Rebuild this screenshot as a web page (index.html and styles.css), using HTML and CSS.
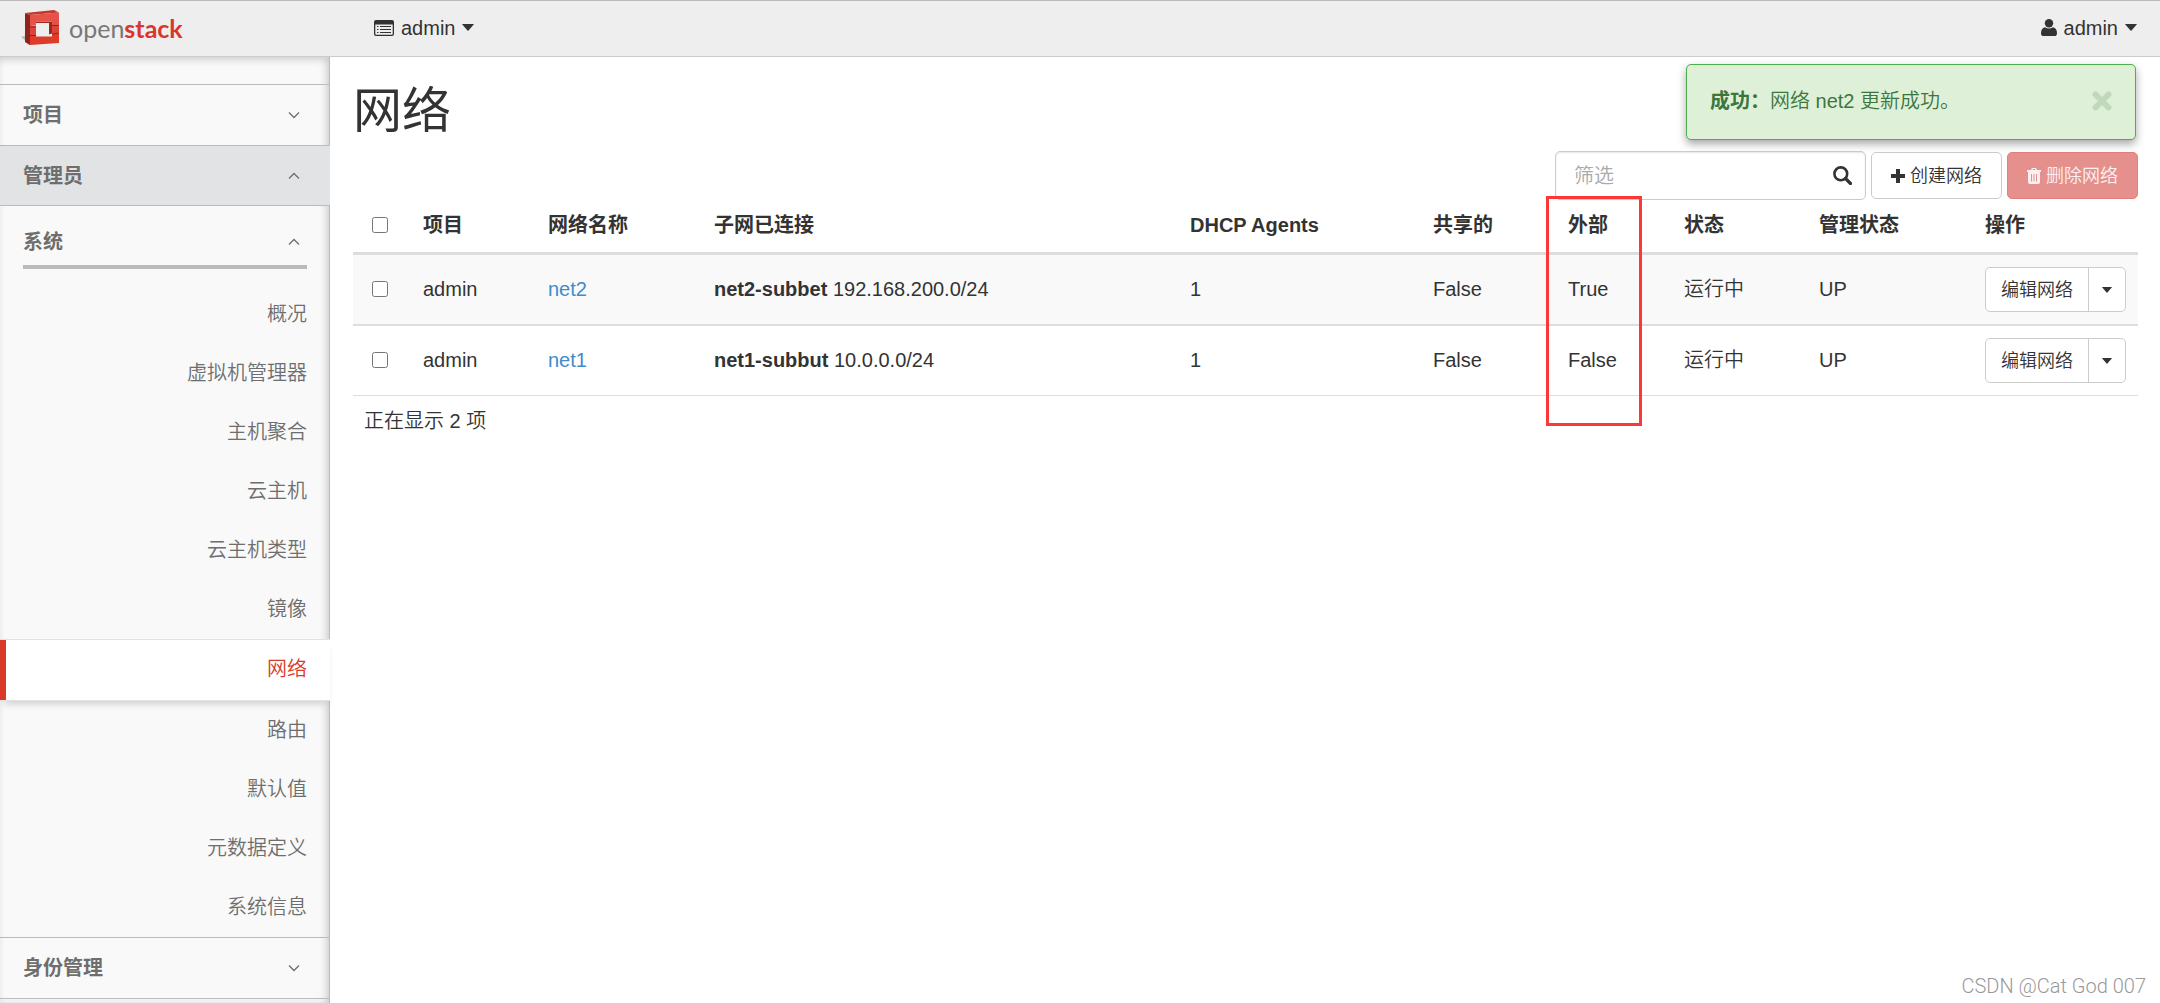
FILE: index.html
```html
<!DOCTYPE html>
<html lang="zh-CN">
<head>
<meta charset="utf-8">
<title>网络 - OpenStack Dashboard</title>
<meta name="viewport" content="width=device-width, initial-scale=1">
<link rel="stylesheet" href="styles.css">
</head>
<body>
<svg class="sprite" aria-hidden="true">
  <symbol id="chevron-down" viewBox="0 0 12 8"><path d="M1 1.5 6 6.500 11 1.500" fill="none" stroke="currentColor" stroke-width="1.300"/></symbol>
  <symbol id="chevron-up" viewBox="0 0 12 8"><path d="M1 6.500 6 1.500 11 6.500" fill="none" stroke="currentColor" stroke-width="1.300"/></symbol>
  <symbol id="caret" viewBox="0 0 12 7"><path d="M0.500 0h11q.6 0 .2.500L6.500 6.400q-.5.500-1 0L.3.500Q-.1 0 .5 0z" fill="currentColor"/></symbol>
</svg>

<header class="topbar">
  <a class="brand" href="#" aria-label="openstack">
    <svg class="brand-mark" viewBox="0 0 40 36" aria-hidden="true">
      <path d="M0 27 6 25v9l4 1z" fill="#9a9a9a" opacity=".6"/>
      <path d="M4 3 9 5v30l-5-3z" fill="#8f241c"/>
      <path d="M4 3 33 0l5 2.500L9 5z" fill="#c0392d"/>
      <path d="M9 5 38 2.500v13H31V11.500H15v4L9 16z" fill="#e6524a"/>
      <path d="M9 16h6v9H9zM31 15.500h7V23l-7 1z" fill="#dc443a"/>
      <path d="M9 25h6v1.500h16V24l7-1v10L9 35z" fill="#dd3c28"/>
      <path d="M15 11.500h16v14.500H15z" fill="#eee"/>
      <path d="M28 11.500h3v12l-3 1zM15 11.500h16v1.500H15z" fill="#9c2820"/>
      <path d="M4 15.500 9 17h6M4 23.500 9 25.500h6M31 15.500h7M31 24l7-1" fill="none" stroke="#8f241c" stroke-width="1.200"/>
    </svg>
    <span class="brand-name">open<b>stack</b></span>
  </a>
  <button class="menu" type="button">
    <svg width="20" height="16" viewBox="0 0 20 16" aria-hidden="true">
      <path d="M2 0h16q2 0 2 2v12q0 2-2 2H2q-2 0-2-2V2Q0 0 2 0zM1.300 4.500v9.200q0 1 1 1h15.400q1 0 1-1V4.500z" fill="currentColor" fill-rule="evenodd"/>
      <path d="M3 6.500h1.500M3 9.500h1.500M3 12.500h1.500M6 6.500h11M6 9.500h11M6 12.500h11" stroke="currentColor" stroke-width="1.200"/>
    </svg>
    <span>admin</span>
    <svg class="caret" aria-hidden="true"><use href="#caret"/></svg>
  </button>
  <button class="menu menu-user" type="button">
    <svg width="16" height="17" viewBox="0 0 16 17" aria-hidden="true">
      <circle cx="8" cy="4.200" r="4.200" fill="currentColor"/>
      <path d="M4 8.200Q8 11 12 8.200q4 .8 4 6 0 2.800-2.500 2.800h-11Q0 17 0 14.200 0 9 4 8.200z" fill="currentColor"/>
    </svg>
    <span>admin</span>
    <svg class="caret" aria-hidden="true"><use href="#caret"/></svg>
  </button>
</header>

<div class="layout">
  <nav class="sidebar">
    <a class="panel" href="#"><span>项目</span><svg class="chevron" aria-hidden="true"><use href="#chevron-down"/></svg></a>
    <a class="panel panel-open" href="#"><span>管理员</span><svg class="chevron" aria-hidden="true"><use href="#chevron-up"/></svg></a>
    <div class="group">
      <a class="group-title" href="#"><span>系统</span><svg class="chevron" aria-hidden="true"><use href="#chevron-up"/></svg></a>
      <ul class="links">
        <li><a href="#">概况</a></li>
        <li><a href="#">虚拟机管理器</a></li>
        <li><a href="#">主机聚合</a></li>
        <li><a href="#">云主机</a></li>
        <li><a href="#">云主机类型</a></li>
        <li><a href="#">镜像</a></li>
        <li><a class="active" href="#" aria-current="page">网络</a></li>
        <li><a href="#">路由</a></li>
        <li><a href="#">默认值</a></li>
        <li><a href="#">元数据定义</a></li>
        <li><a href="#">系统信息</a></li>
      </ul>
    </div>
    <a class="panel panel-last" href="#"><span>身份管理</span><svg class="chevron" aria-hidden="true"><use href="#chevron-down"/></svg></a>
  </nav>

  <main class="content">
    <h1>网络</h1>
    <div class="toolbar">
      <div class="filter">
        <input type="text" placeholder="筛选" aria-label="筛选">
        <button type="button" aria-label="搜索">
          <svg width="19" height="19" viewBox="0 0 19 19" aria-hidden="true"><circle cx="7.800" cy="7.800" r="6.400" fill="none" stroke="currentColor" stroke-width="2.600"/><path d="m12.500 12.500 5 5" stroke="currentColor" stroke-width="3.200" stroke-linecap="round"/></svg>
        </button>
      </div>
      <button class="btn" type="button">
        <svg width="14" height="14" viewBox="0 0 14 14" aria-hidden="true"><path d="M7 0v14M0 7h14" stroke="currentColor" stroke-width="4"/></svg>
        创建网络
      </button>
      <button class="btn btn-danger" type="button" disabled>
        <svg width="14" height="16" viewBox="0 0 14 16" aria-hidden="true"><path d="M5 0h4l1 2h4v2h-1v10q0 2-2 2H3q-2 0-2-2V4H0V2h4zm.5 2h3L8 1H6zM4 6v7.500h1V6zm2.500 0v7.500h1V6zM9 6v7.500h1V6z" fill="currentColor" fill-rule="evenodd"/></svg>
        删除网络
      </button>
    </div>

    <table class="networks">
      <colgroup>
        <col class="c-check"><col class="c-project"><col class="c-name"><col><col class="c-dhcp"><col class="c-shared"><col class="c-external"><col class="c-status"><col class="c-admin"><col class="c-actions">
      </colgroup>
      <thead>
        <tr>
          <th><input type="checkbox" aria-label="全选"></th>
          <th>项目</th>
          <th>网络名称</th>
          <th>子网已连接</th>
          <th>DHCP Agents</th>
          <th>共享的</th>
          <th class="marked">外部<span class="marker"></span></th>
          <th>状态</th>
          <th>管理状态</th>
          <th>操作</th>
        </tr>
      </thead>
      <tbody>
        <tr>
          <td><input type="checkbox" aria-label="net2"></td>
          <td>admin</td>
          <td><a href="#">net2</a></td>
          <td><b>net2-subbet</b> 192.168.200.0/24</td>
          <td>1</td>
          <td>False</td>
          <td>True</td>
          <td>运行中</td>
          <td>UP</td>
          <td><div class="split"><button type="button">编辑网络</button><button type="button" aria-label="更多操作"><svg class="caret" aria-hidden="true"><use href="#caret"/></svg></button></div></td>
        </tr>
        <tr>
          <td><input type="checkbox" aria-label="net1"></td>
          <td>admin</td>
          <td><a href="#">net1</a></td>
          <td><b>net1-subbut</b> 10.0.0.0/24</td>
          <td>1</td>
          <td>False</td>
          <td>False</td>
          <td>运行中</td>
          <td>UP</td>
          <td><div class="split"><button type="button">编辑网络</button><button type="button" aria-label="更多操作"><svg class="caret" aria-hidden="true"><use href="#caret"/></svg></button></div></td>
        </tr>
      </tbody>
      <tfoot>
        <tr><td colspan="10">正在显示 2 项</td></tr>
      </tfoot>
    </table>
  </main>
</div>

<div class="alert" role="alert">
  <p><b>成功：</b>网络 net2 更新成功。</p>
  <button type="button" aria-label="关闭">
    <svg width="20" height="20" viewBox="0 0 20 20" aria-hidden="true"><path d="m3.500 3.500 13 13M16.500 3.500l-13 13" stroke="currentColor" stroke-width="6" stroke-linecap="round"/></svg>
  </button>
</div>
<div class="watermark">CSDN @Cat God 007</div>
</body>
</html>
```
FILE: styles.css
```css
* { box-sizing: border-box; }

body {
  margin: 0;
  min-height: 100vh;
  display: flex;
  flex-direction: column;
  position: relative;
  background: #fff;
  color: #333;
  font-family: "Liberation Sans", "Noto Sans CJK SC", sans-serif;
  font-size: 20px;
  font-weight: 350;
  line-height: 28px;
}

a { text-decoration: none; }
b, th { font-weight: 700; }
button, input { font: inherit; color: inherit; }
button { padding: 0; border: 0; background: none; cursor: pointer; }
svg { flex: none; }
.sprite { display: none; }
.caret { width: 12px; height: 7px; }
.chevron { width: 12px; height: 8px; margin-right: 7px; }

/* Top bar */
.topbar {
  height: 57px;
  display: flex;
  align-items: center;
  padding-bottom: 2px;
  background: #eee;
  border-top: 1px solid #bbb;
  border-bottom: 1px solid #ccc;
}
.brand {
  width: 352px;
  padding-left: 21px;
  display: flex;
  align-items: center;
  gap: 8px;
  color: #777;
}
.brand-mark { width: 40px; height: 36px; }
.brand-name { font-family: Lato, sans-serif; font-size: 25px; font-weight: 400; }
.brand-name b { color: #d9362e; font-weight: 700; }
.menu {
  display: flex;
  align-items: center;
  gap: 7px;
  padding: 0 23px 0 22px;
}
.menu-user { margin-left: auto; }

/* Side navigation */
.layout { flex: 1; display: flex; }
.sidebar {
  width: 330px;
  flex: none;
  padding-top: 27px;
  background: #f9f9f9;
  box-shadow: inset -1px 0 0 #bbb, inset -3px 2px 8px rgba(0, 0, 0, .2);
}
.sidebar a { color: #6e6e6e; }
.panel, .group-title {
  display: flex;
  align-items: center;
  justify-content: space-between;
  font-weight: 700;
}
.panel {
  height: 61px;
  padding: 0 23px;
  border-top: 1px solid #bbb;
}
.panel-open { background: #e1e3e5; border-bottom: 1px solid #bbb; }
.panel-last { height: 62px; border-bottom: 1px solid #bbb; }
.group-title {
  height: 63px;
  margin: 0 23px;
  padding-top: 13px;
  border-bottom: 4px solid #bbb;
}
.links { margin: 0; padding: 16px 0 0; list-style: none; }
.links a {
  display: block;
  padding: 15px 23px 16px;
  text-align: right;
}
.links .active {
  padding-bottom: 17px;
  background: #fff;
  color: #d93a27;
  border: solid #e2e2e2;
  border-width: 1px 0;
  box-shadow: inset 6px 0 0 #d93a27, 0 6px 8px -4px rgba(0, 0, 0, .2);
}

/* Main area */
.content { flex: 1; min-width: 0; padding: 27px 22px 0 23px; }
h1 { margin: 0 0 13px; font-size: 49px; font-weight: 400; line-height: 54px; }
.toolbar { display: flex; justify-content: flex-end; align-items: center; gap: 5px; }
.filter {
  width: 311px;
  height: 49px;
  display: flex;
  align-items: center;
  padding-right: 13px;
  border: 1px solid #ccc;
  border-radius: 5px;
  box-shadow: inset 0 1px 2px rgba(0, 0, 0, .1);
}
.filter input {
  flex: 1;
  min-width: 0;
  padding: 0 18px;
  border: 0;
  outline: 0;
  background: none;
}
.filter input::placeholder { color: #aaa; opacity: 1; }
.filter button { display: flex; }
.btn {
  height: 47px;
  display: flex;
  align-items: center;
  gap: 5px;
  padding: 0 19px;
  border: 1px solid #ccc;
  border-radius: 5px;
  background: #fff;
  font-size: 18px;
}
.btn-danger { background: #e5908d; border-color: #e07f7b; color: #fcf0f0; }

.networks { width: 100%; table-layout: fixed; border-spacing: 0; }
.c-check { width: 59px; }
.c-project { width: 125px; }
.c-name { width: 166px; }
.c-dhcp { width: 243px; }
.c-shared { width: 135px; }
.c-external { width: 116px; }
.c-status { width: 135px; }
.c-admin { width: 166px; }
.c-actions { width: 164px; }
.networks th, .networks td { padding: 12px 11px; text-align: left; vertical-align: middle; }
.networks th { padding: 11px 11px 13px; border-bottom: 3px solid #ddd; }
.networks tbody td { padding: 11px 11px 13px; border-bottom: 1px solid #ddd; }
.networks tbody td:last-child { padding: 12px 11px; }
.networks tbody tr:first-child td { background: #f9f9f9; border-bottom-width: 2px; }
.networks tfoot td { padding: 11px; }
.networks a { color: #428bca; }
.networks input { display: block; width: 16px; height: 16px; margin: 0 0 0 8px; }
.marked { position: relative; }
.marker {
  position: absolute;
  top: -4px;
  left: -11px;
  width: 96px;
  height: 230px;
  border: 3px solid #fc3837;
  pointer-events: none;
}
.split {
  width: 141px;
  height: 45px;
  display: flex;
  border: 1px solid #ccc;
  border-radius: 5px;
  background: #fff;
  font-size: 18px;
}
.split button { flex: 1; }
.split button + button {
  flex: 0 0 37px;
  display: flex;
  align-items: center;
  justify-content: center;
  border-left: 1px solid #ccc;
}
.split .caret { width: 10px; height: 6px; }

/* Notification */
.alert {
  position: absolute;
  top: 64px;
  right: 24px;
  width: 450px;
  height: 76px;
  display: flex;
  align-items: center;
  justify-content: space-between;
  padding: 0 23px 2px;
  border: 1px solid #4cae4c;
  border-radius: 5px;
  background: #dff0d8;
  color: #3c763d;
  box-shadow: 0 4px 9px rgba(0, 0, 0, .35);
}
.alert p { margin: 0; }
.alert button { display: flex; color: #bfd9ba; }

.watermark {
  position: absolute;
  right: 14px;
  bottom: 3px;
  color: #999;
  font-family: Roboto, sans-serif;
}
```
